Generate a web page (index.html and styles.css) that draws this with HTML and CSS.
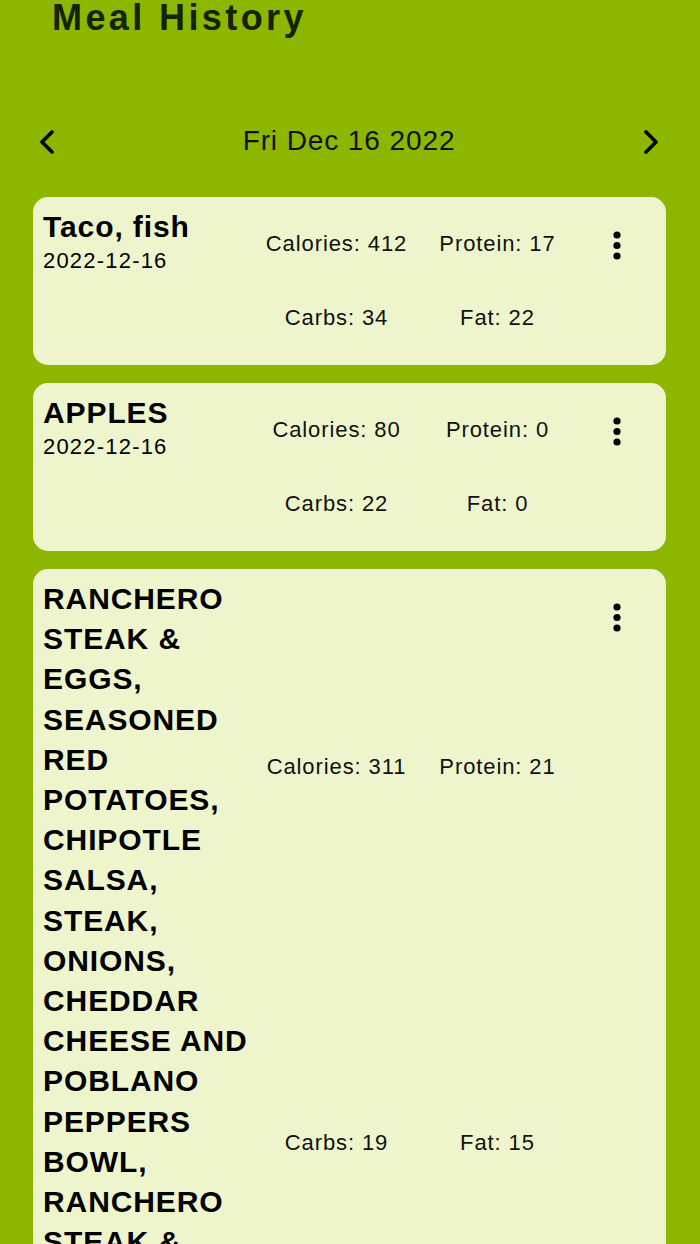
FILE: index.html
```html
<!DOCTYPE html>
<html lang="en">
<head>
    <meta charset="UTF-8">
    <meta name="viewport" content="width=device-width, initial-scale=1.0">
    <title>Meal History</title>
    <link rel="stylesheet" href="styles.css">
</head>
<body>
    <div class="screen">
        <h1 class="title">Meal History</h1>

        <div class="date-nav">
            <button class="nav-btn" aria-label="Previous day">
                <svg width="16" height="24" viewBox="0 0 16 24"><path d="M13 2 L3 12 L13 22" fill="none" stroke="#000" stroke-width="3.6" stroke-linecap="round" stroke-linejoin="round"/></svg>
            </button>
            <span class="date-label">Fri Dec 16 2022</span>
            <button class="nav-btn" aria-label="Next day">
                <svg width="16" height="24" viewBox="0 0 16 24"><path d="M3 2 L13 12 L3 22" fill="none" stroke="#000" stroke-width="3.6" stroke-linecap="round" stroke-linejoin="round"/></svg>
            </button>
        </div>

        <div class="meal-list">
            <div class="meal-card">
                <div class="meal-name">
                    <h2>Taco, fish</h2>
                    <p class="meal-date">2022-12-16</p>
                </div>
                <div class="nutrients">
                    <span>Calories: 412</span>
                    <span>Protein: 17</span>
                    <span>Carbs: 34</span>
                    <span>Fat: 22</span>
                </div>
                <button class="menu-btn" aria-label="More">
                    <svg width="12" height="34" viewBox="0 0 12 34"><circle cx="6" cy="6" r="3.6"/><circle cx="6" cy="16.5" r="3.6"/><circle cx="6" cy="27" r="3.6"/></svg>
                </button>
            </div>

            <div class="meal-card">
                <div class="meal-name">
                    <h2>APPLES</h2>
                    <p class="meal-date">2022-12-16</p>
                </div>
                <div class="nutrients">
                    <span>Calories: 80</span>
                    <span>Protein: 0</span>
                    <span>Carbs: 22</span>
                    <span>Fat: 0</span>
                </div>
                <button class="menu-btn" aria-label="More">
                    <svg width="12" height="34" viewBox="0 0 12 34"><circle cx="6" cy="6" r="3.6"/><circle cx="6" cy="16.5" r="3.6"/><circle cx="6" cy="27" r="3.6"/></svg>
                </button>
            </div>

            <div class="meal-card">
                <div class="meal-name">
                    <h2>RANCHERO STEAK &amp; EGGS, SEASONED RED POTATOES, CHIPOTLE SALSA, STEAK, ONIONS, CHEDDAR CHEESE AND POBLANO PEPPERS BOWL, RANCHERO STEAK &amp; EGGS</h2>
                    <p class="meal-date">2022-12-16</p>
                </div>
                <div class="nutrients">
                    <span>Calories: 311</span>
                    <span>Protein: 21</span>
                    <span>Carbs: 19</span>
                    <span>Fat: 15</span>
                </div>
                <button class="menu-btn" aria-label="More">
                    <svg width="12" height="34" viewBox="0 0 12 34"><circle cx="6" cy="6" r="3.6"/><circle cx="6" cy="16.5" r="3.6"/><circle cx="6" cy="27" r="3.6"/></svg>
                </button>
            </div>
        </div>
    </div>
</body>
</html>
```

FILE: styles.css
```css
body {
    margin: 0;
    background: #8db600;
    color: #000;
    font-family: "Liberation Sans", Arial, sans-serif;
}
.screen {
    padding: 0 34px 0 33px;
}
.title {
    margin: 0 0 0 19px;
    font-size: 36px;
    line-height: 36px;
    font-weight: bold;
    letter-spacing: 3.4px;
    color: #142400;
}
.date-nav {
    display: flex;
    align-items: center;
    justify-content: space-between;
    height: 56px;
    margin: 77px 0 0 0;
    padding: 0 7px 0 6px;
}
.nav-btn {
    background: none;
    border: none;
    padding: 2px 0 0 0;
    width: 16px;
    height: 26px;
    cursor: pointer;
}
.nav-btn svg {
    display: block;
}
.date-label {
    font-size: 28px;
    letter-spacing: 0.9px;
    color: #111;
}
.meal-list {
    display: flex;
    flex-direction: column;
    gap: 18px;
    margin-top: 28px;
}
.meal-card {
    display: flex;
    background: #eef5cd;
    border-radius: 15px;
    padding: 10px;
}
.meal-name {
    width: 213px;
    flex-shrink: 0;
}
.meal-name h2 {
    margin: 0;
    font-size: 30px;
    line-height: 40.2px;
    letter-spacing: 0.9px;
    font-weight: bold;
}
.meal-date {
    margin: 0;
    font-size: 22px;
    line-height: 28px;
    letter-spacing: 1.2px;
}
.nutrients {
    width: 322px;
    flex-shrink: 0;
    min-height: 148px;
    display: grid;
    grid-template-columns: 1fr 1fr;
    grid-template-rows: 1fr 1fr;
    align-items: center;
    justify-items: center;
    font-size: 22px;
    letter-spacing: 0.9px;
    color: #111;
}
.menu-btn {
    flex: 1;
    align-self: flex-start;
    background: none;
    border: none;
    padding: 22px 0 0 0;
    display: flex;
    justify-content: center;
    cursor: pointer;
}
.menu-btn svg {
    display: block;
    fill: #000;
}
```
